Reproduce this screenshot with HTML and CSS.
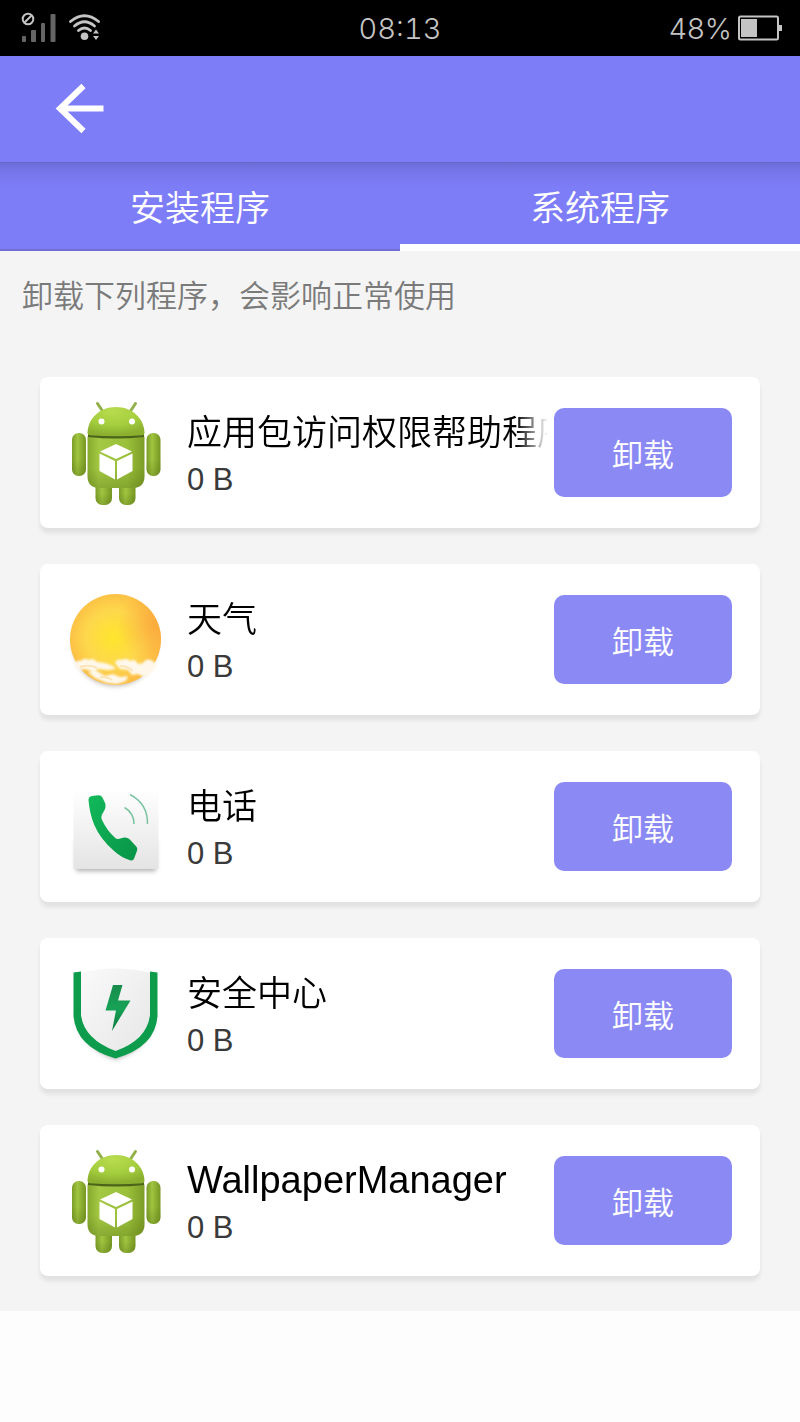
FILE: index.html
```html
<!DOCTYPE html>
<html lang="zh-CN">
<head>
    <meta charset="UTF-8" />
    <meta name="viewport" content="width=device-width, initial-scale=1.0" />
    <title>系统程序</title>
    <link rel="stylesheet" href="styles.css">
</head>
<body>
    <svg class="defs" width="0" height="0" aria-hidden="true">
        <defs>
            <linearGradient id="bodyGreen" x1="0" x2="1">
                <stop offset="0" stop-color="#86a92e" />
                <stop offset="0.2" stop-color="#a3c843" />
                <stop offset="0.7" stop-color="#9ac03a" />
                <stop offset="1" stop-color="#7c9c26" />
            </linearGradient>
            <linearGradient id="limbGreen" x1="0" x2="1">
                <stop offset="0" stop-color="#7b9c28" />
                <stop offset="0.4" stop-color="#a0c540" />
                <stop offset="1" stop-color="#769622" />
            </linearGradient>
            <radialGradient id="headGreen" cx="0.45" cy="0.15" r="0.8">
                <stop offset="0" stop-color="#b8dc4e" />
                <stop offset="0.6" stop-color="#a4cd3e" />
                <stop offset="1" stop-color="#8bb030" />
            </radialGradient>
            <linearGradient id="shade" x1="0" x2="0" y1="0" y2="1">
                <stop offset="0.6" stop-color="#4c6610" stop-opacity="0" />
                <stop offset="1" stop-color="#4c6610" stop-opacity="0.3" />
            </linearGradient>
            <symbol id="android" viewBox="0 0 120 120">
                <path d="M37.500 10.500l6 9M75.500 10.500l-6 9" stroke="#92b04a" stroke-width="3" stroke-linecap="round" />
                <rect x="35.500" y="83" width="16.500" height="29" rx="7" fill="url(#limbGreen)" />
                <rect x="59" y="83" width="16.500" height="29" rx="7" fill="url(#limbGreen)" />
                <rect x="35.500" y="83" width="16.500" height="29" rx="7" fill="url(#shade)" />
                <rect x="59" y="83" width="16.500" height="29" rx="7" fill="url(#shade)" />
                <rect x="12" y="40" width="14" height="43" rx="6.500" fill="url(#limbGreen)" />
                <rect x="86.500" y="40" width="14" height="43" rx="6.500" fill="url(#limbGreen)" />
                <rect x="12" y="40" width="14" height="43" rx="6.500" fill="url(#shade)" />
                <rect x="86.500" y="40" width="14" height="43" rx="6.500" fill="url(#shade)" />
                <path d="M27.500 43.500h57V83q0 12-12 12h-33q-12 0-12-12z" fill="url(#bodyGreen)" />
                <path d="M27.500 43.500h57V83q0 12-12 12h-33q-12 0-12-12z" fill="url(#shade)" />
                <path d="M28 41h56v3q-28 3-56 0z" fill="#4c641a" />
                <path d="M27.500 40C28 25 40 14 56 14s28 11 28.500 26q0 2-2 2.200Q56 44.500 29.500 42.200q-2-.2-2-2.200z" fill="url(#headGreen)" />
                <circle cx="41.500" cy="28.500" r="3" fill="#fff" />
                <circle cx="72" cy="28.500" r="3" fill="#fff" />
                <path d="M56 51l16 7.500L56 66 40 58.500z" fill="#fff" />
                <path d="M39.500 60.500L55 68v18.500L39.500 78zM72.500 60.500L57 68v18.500L72.500 78z" fill="#fff" />
            </symbol>
        </defs>
    </svg>

    <div class="status-bar">
        <div class="status-left">
            <svg width="36" height="32" viewBox="0 0 36 32" aria-hidden="true">
                <g fill="#656565">
                    <rect x="1" y="24" width="4" height="6" rx="1" />
                    <rect x="10" y="18" width="5" height="12" rx="1" />
                    <rect x="20" y="11" width="4" height="19" rx="1" />
                    <rect x="29.500" y="2" width="5" height="28" rx="1" />
                </g>
                <circle cx="7" cy="7" r="5.300" fill="none" stroke="#c4c4c4" stroke-width="2" />
                <path d="M3.500 10.500l7-7" stroke="#c4c4c4" stroke-width="2" />
            </svg>
            <svg width="32" height="32" viewBox="0 0 32 32" aria-hidden="true">
                <g fill="none" stroke="#c4c4c4" stroke-width="2.800" stroke-linecap="round">
                    <path d="M1.500 9.500Q15.500-2 29.500 9.500" />
                    <path d="M5.500 14Q15.500 5.500 25.500 14" />
                    <path d="M9.500 18.500Q15.500 13.500 21.500 18.500" />
                </g>
                <circle cx="15.500" cy="24.300" r="3.800" fill="#c4c4c4" />
                <path d="M24 21.500l3-4 3 4zM24 24l3 4 3-4z" fill="#c4c4c4" />
            </svg>
        </div>
        <div class="clock">08:13</div>
        <div class="status-right">
            <span>48%</span>
            <svg width="46" height="26" viewBox="0 0 46 26" aria-hidden="true">
                <rect x="2" y="1.500" width="39" height="23" rx="1.500" fill="none" stroke="#c4c4c4" stroke-width="2" />
                <rect x="4" y="4" width="16" height="18" fill="#c4c4c4" />
                <rect x="42" y="10" width="3" height="6" fill="#c4c4c4" />
            </svg>
        </div>
    </div>

    <header class="app-bar">
        <button class="back" type="button" aria-label="返回">
            <svg width="50" height="52" viewBox="0 0 50 52" aria-hidden="true">
                <path d="M28.500 3L5 25.500 28.500 48M5 25.500h43.500" fill="none" stroke="#fff" stroke-width="6" />
            </svg>
        </button>
    </header>

    <nav class="tabs">
        <button class="tab" type="button">安装程序</button>
        <button class="tab active" type="button">系统程序</button>
    </nav>

    <main>
        <p class="hint">卸载下列程序，会影响正常使用</p>
        <ul class="app-list">
            <li class="app">
                <svg class="app-icon" viewBox="0 0 120 120" aria-hidden="true"><use href="#android" /></svg>
                <div class="app-info">
                    <div class="app-name">应用包访问权限帮助程序</div>
                    <div class="app-size">0 B</div>
                </div>
                <button class="uninstall" type="button">卸载</button>
            </li>
            <li class="app">
                <svg class="app-icon" viewBox="0 0 120 120" aria-hidden="true">
                    <defs>
                        <radialGradient id="sun" cx="0.48" cy="0.48" r="0.6">
                            <stop offset="0" stop-color="#fee52c" />
                            <stop offset="0.5" stop-color="#fdd84c" />
                            <stop offset="1" stop-color="#fcb240" />
                        </radialGradient>
                        <radialGradient id="glow" cx="0.92" cy="0.35" r="0.4">
                            <stop offset="0" stop-color="#fa9c38" stop-opacity="0.6" />
                            <stop offset="1" stop-color="#fa9c38" stop-opacity="0" />
                        </radialGradient>
                        <filter id="soft" x="-20%" y="-20%" width="140%" height="140%"><feGaussianBlur stdDeviation="2.500" /></filter>
                        <filter id="mist" x="-20%" y="-20%" width="140%" height="140%"><feGaussianBlur stdDeviation="0.900" /></filter>
                    </defs>
                    <ellipse cx="55" cy="64" rx="42" ry="42" fill="#8a8070" opacity="0.6" filter="url(#soft)" />
                    <circle cx="55.500" cy="59.500" r="45.500" fill="url(#sun)" />
                    <circle cx="55.500" cy="59.500" r="45.500" fill="url(#glow)" />
                    <g filter="url(#mist)" fill="#fff8ea">
                        <path d="M14 84q3-5 7-3 3-4 8-1 4-3 8 2l8 1 8 3 3 3-8 1-10-1-4 3-9-3-5 1z" />
                        <path d="M55 83q2-5 7-3 4-3 8 1 5-3 8 3l5-1q3-5 8-3l6 4-4 8-9 5-6-3-6 1-4-5-8-1z" />
                        <path d="M28 92l9-1 8 5 8-2 7 3 8-1-2 5-9 3-10-1-12-5z" />
                    </g>
                    <path d="M20 87q9-3 17 1M60 86q8 0 13 5M40 97q8 0 12 3" fill="none" stroke="#f9cf87" stroke-width="1.500" opacity="0.6" />
                </svg>
                <div class="app-info">
                    <div class="app-name">天气</div>
                    <div class="app-size">0 B</div>
                </div>
                <button class="uninstall" type="button">卸载</button>
            </li>
            <li class="app">
                <svg class="app-icon" viewBox="0 0 120 120" aria-hidden="true">
                    <defs>
                        <linearGradient id="tile" x1="0" x2="0" y1="0" y2="1">
                            <stop offset="0" stop-color="#ffffff" />
                            <stop offset="1" stop-color="#e4e4e4" />
                        </linearGradient>
                        <linearGradient id="phone" x1="0" x2="1" y1="0" y2="1">
                            <stop offset="0" stop-color="#12b95a" />
                            <stop offset="1" stop-color="#079347" />
                        </linearGradient>
                    </defs>
                    <rect x="16" y="74" width="80" height="30" fill="#777" opacity="0.6" filter="url(#soft)" />
                    <rect x="13.500" y="22" width="85" height="80" rx="2" fill="url(#tile)" />
                    <path d="M28.500 33q0-3.500 3.500-4l6-.700q3-.3 4.300 2l3 6.200q.7 3.500-.5 6l-3 5.500q-1 2 0 4.500 5 11 13.500 18.500 1.500 1.500 4 .8l5-1.300q2.500-.5 5 1.500l7 7.500q1.500 1.700.8 4l-3 8q-1 2.500-4 1.700-8-2-16-9.200-14-12-20-26.500-4.500-11-5.600-24.500z" fill="url(#phone)" />
                    <path d="M64.500 40.500Q74 46 74 57" fill="none" stroke="#7bc4a2" stroke-width="1.500" />
                    <path d="M70 27.500Q88 37 87.500 57" fill="none" stroke="#7bc4a2" stroke-width="1.500" />
                </svg>
                <div class="app-info">
                    <div class="app-name">电话</div>
                    <div class="app-size">0 B</div>
                </div>
                <button class="uninstall" type="button">卸载</button>
            </li>
            <li class="app">
                <svg class="app-icon" viewBox="0 0 120 120" aria-hidden="true">
                    <defs>
                        <linearGradient id="shield" x1="0" x2="1" y1="0" y2="1">
                            <stop offset="0" stop-color="#fafafa" />
                            <stop offset="1" stop-color="#e6e6e6" />
                        </linearGradient>
                        <linearGradient id="bolt" x1="0" x2="0" y1="0" y2="1">
                            <stop offset="0" stop-color="#178c4c" />
                            <stop offset="0.5" stop-color="#17a257" />
                            <stop offset="1" stop-color="#087a3a" />
                        </linearGradient>
                    </defs>
                    <path d="M16 60q5 34 39.500 45.500Q91 94 95 60z" fill="#666" opacity="0.5" filter="url(#soft)" />
                    <path d="M20 19q35-9 72 0v45q-5 23-36.500 34Q25 88 20 64z" fill="url(#shield)" />
                    <path d="M13.500 18.500l7.500-1V61q3 24 34.500 36Q87 86 90 61V17.500l7.500 1V62q-2 31-42 42.500Q16 93 13.500 62z" fill="#0d9c4b" />
                    <path d="M53 31h9.500l-4.500 15.500h12.500L52 77l4-20.500H45.500z" fill="url(#bolt)" />
                </svg>
                <div class="app-info">
                    <div class="app-name">安全中心</div>
                    <div class="app-size">0 B</div>
                </div>
                <button class="uninstall" type="button">卸载</button>
            </li>
            <li class="app">
                <svg class="app-icon" viewBox="0 0 120 120" aria-hidden="true"><use href="#android" /></svg>
                <div class="app-info">
                    <div class="app-name latin">WallpaperManager</div>
                    <div class="app-size">0 B</div>
                </div>
                <button class="uninstall" type="button">卸载</button>
            </li>
        </ul>
    </main>
</body>
</html>
```
FILE: styles.css
```css
* {
    margin: 0;
    padding: 0;
    box-sizing: border-box;
}
body {
    background-color: #fdfdfd;
    font-family: "Liberation Sans", "Noto Sans CJK SC", sans-serif;
    font-weight: 350;
}
button {
    border: none;
    background: none;
    color: white;
    font-family: inherit;
    font-weight: inherit;
    cursor: pointer;
}
.defs {
    position: absolute;
}

/* status bar */
.status-bar {
    display: grid;
    grid-template-columns: 1fr auto 1fr;
    align-items: center;
    height: 56px;
    padding: 0 17px;
    background-color: black;
    color: #c4c4c4;
    font-family: Inter, sans-serif;
    font-size: 29px;
    font-weight: 300;
}
.status-left {
    display: flex;
    gap: 12px;
    padding-left: 4px;
}
.clock {
    font-variant-numeric: tabular-nums;
}
.status-right {
    display: flex;
    align-items: center;
    justify-content: flex-end;
    gap: 5px;
}

/* app bar */
.app-bar {
    display: flex;
    align-items: center;
    height: 106px;
    padding: 0 55px;
    background-color: #7e7df8;
}
.back svg {
    display: block;
}

/* tabs */
.tabs {
    display: flex;
    height: 89px;
    background: linear-gradient(#6c6cd6, #7574e6 6px, #7e7df8 24px);
    border-top: 1px solid #6868cc;
}
.tab {
    flex: 1;
    padding-bottom: 4px;
    box-shadow: inset 0 -2px #7170d2;
    font-size: 35px;
}
.tab.active {
    box-shadow: inset 0 -7px white;
}

main {
    background-color: #f4f4f4;
    padding-bottom: 35px;
}
.hint {
    padding: 21px 22px 0;
    color: #7a7a7a;
    font-size: 31px;
    line-height: 50px;
}
.app-list {
    display: flex;
    flex-direction: column;
    gap: 36px;
    padding: 55px 40px 0;
    list-style: none;
}
.app {
    display: flex;
    align-items: center;
    height: 151px;
    padding: 0 28px 0 20px;
    background-color: white;
    border-radius: 8px;
    box-shadow: 0 5px 4px rgba(0,0,0,0.08);
}
.app-icon {
    flex: none;
    width: 120px;
    height: 120px;
}
.app-info {
    flex: 1;
    min-width: 0;
    padding: 6px 6px 0 7px;
    line-height: 47px;
}
.app-name {
    overflow: hidden;
    white-space: nowrap;
    color: black;
    font-size: 35px;
    -webkit-mask-image: linear-gradient(to left, transparent, black 32px);
    mask-image: linear-gradient(to left, transparent, black 32px);
}
.app-name.latin {
    font-size: 38px;
}
.app-size {
    color: #3a3a3a;
    font-size: 31px;
}
.uninstall {
    flex: none;
    width: 178px;
    height: 89px;
    border-radius: 10px;
    background-color: #8b8af5;
    font-size: 31px;
}
```
